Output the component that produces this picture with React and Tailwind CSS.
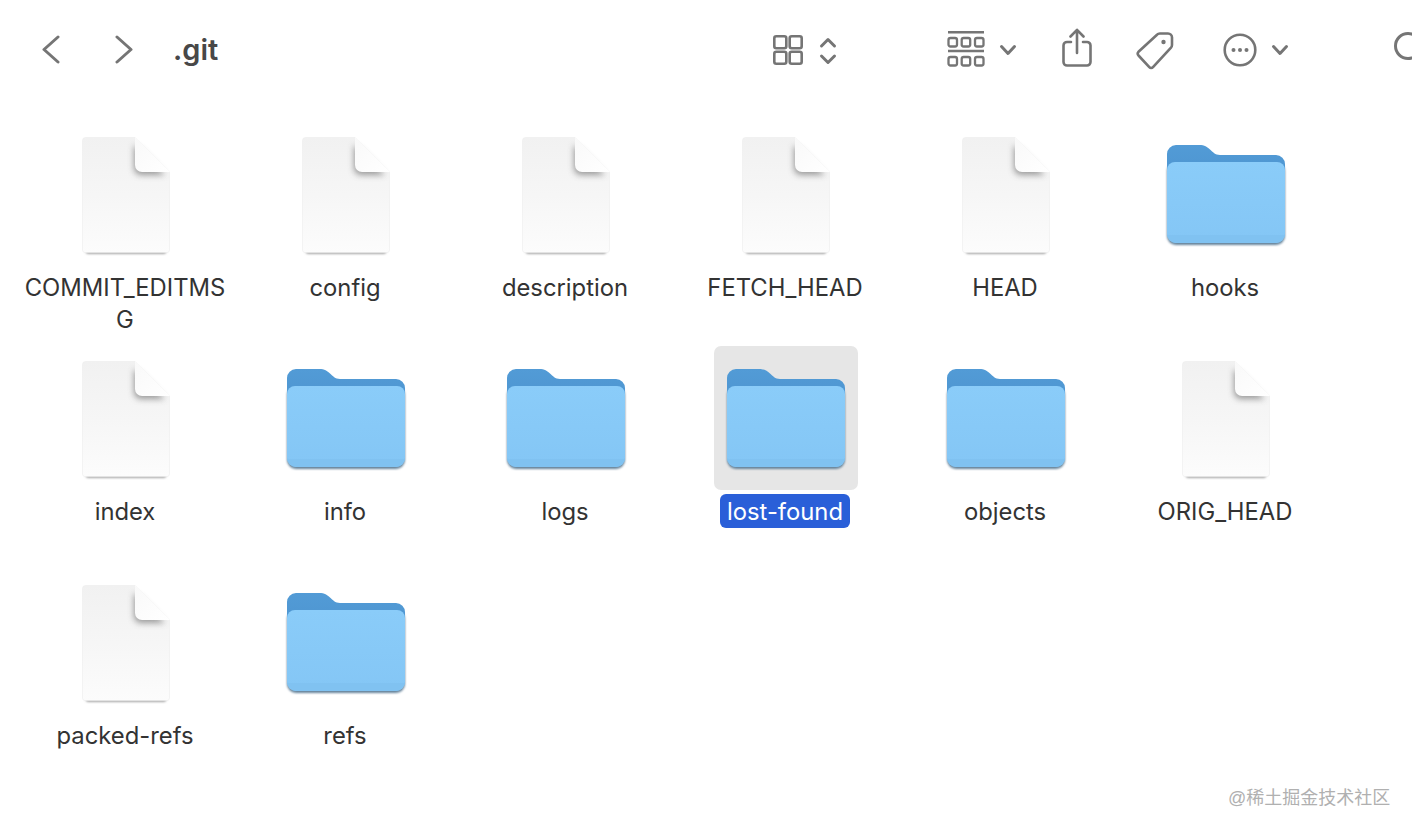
const FONT = "font-['Inter','Liberation_Sans',sans-serif]";

function FileIcon() {
  return (
    <svg width="100" height="124" viewBox="-6 -4 100 124" fill="none">
      <defs>
        <linearGradient id="pg" x1="0" y1="0" x2="0" y2="1">
          <stop offset="0" stopColor="#f1f1f1" />
          <stop offset="0.5" stopColor="#f6f6f6" />
          <stop offset="1" stopColor="#fcfcfc" />
        </linearGradient>
        <linearGradient id="fd" x1="0" y1="0" x2="1" y2="1">
          <stop offset="0" stopColor="#f9f9f9" />
          <stop offset="1" stopColor="#ffffff" />
        </linearGradient>
        <filter id="bl" x="-50%" y="-50%" width="200%" height="200%">
          <feGaussianBlur stdDeviation="3.200" />
        </filter>
        <filter id="bs" x="-10%" y="-10%" width="120%" height="120%">
          <feGaussianBlur stdDeviation="0.8" />
        </filter>
      </defs>
      <path d="M3.500 80H84.500V112a3 3 0 0 1-3 3H6.500a3 3 0 0 1-3-3Z" fill="#a8a8a8" filter="url(#bs)" transform="translate(0 2)" />
      <path d="M3.500 0.500H53L87.500 35V113a2.500 2.500 0 0 1-2.500 2.500H3a2.500 2.500 0 0 1-2.500-2.500V3.500a3 3 0 0 1 3-3Z" fill="url(#pg)" stroke="#ececec" strokeWidth="0.6" />
      <path d="M54 5V28a7 7 0 0 0 7 7H85L62 11Z" fill="#7c7c7c" filter="url(#bl)" transform="translate(-2 3)" opacity="0.75" />
      <path d="M53 0L88 35H60a7 7 0 0 1-7-7Z" fill="url(#fd)" />
    </svg>
  );
}

function FolderIcon() {
  return (
    <svg width="122" height="104" viewBox="-2 -2 122 104" fill="none">
      <defs>
        <linearGradient id="fr" x1="0" y1="0" x2="0" y2="1">
          <stop offset="0" stopColor="#8accf9" />
          <stop offset="1" stopColor="#84c6f5" />
        </linearGradient>
        <linearGradient id="bk" x1="0" y1="0" x2="0" y2="1">
          <stop offset="0" stopColor="#529bd6" />
          <stop offset="1" stopColor="#4a90cc" />
        </linearGradient>
        <filter id="fs" x="-5%" y="-5%" width="110%" height="115%">
          <feGaussianBlur stdDeviation="0.8" />
        </filter>
      </defs>
      <path d="M8 17H110a8 8 0 0 1 8 8V90a9 9 0 0 1-9 9H9a9 9 0 0 1-9-9V25a8 8 0 0 1 8-8Z" fill="#64829a" filter="url(#fs)" transform="translate(0 1)" />
      <path d="M0 60V9a9 9 0 0 1 9-9H32c6 0 8 2 11 4.500s5 5.500 10 5.500H109a9 9 0 0 1 9 9V60Z" fill="url(#bk)" />
      <path d="M8 17H110a8 8 0 0 1 8 8V89a9 9 0 0 1-9 9H9a9 9 0 0 1-9-9V25a8 8 0 0 1 8-8Z" fill="url(#fr)" />
      <path d="M0 90H118V89a9 9 0 0 1-9 9H9a9 9 0 0 1-9-9Z" fill="#80c2f1" />
    </svg>
  );
}

const stroke = { stroke: "#757575", fill: "none", strokeLinecap: "round", strokeLinejoin: "round" };

function Chevron({ dir }) {
  return (
    <svg width="18" height="29" viewBox="0 0 18 29" {...stroke} strokeWidth="3">
      <path d={dir === "l" ? "M16 2L2 14.500L16 27" : "M2 2L16 14.500L2 27"} />
    </svg>
  );
}

function Small() {
  return (
    <svg width="18" height="12" viewBox="0 0 18 12" {...stroke} strokeWidth="3">
      <path d="M2.500 2.500L9 9.500L15.500 2.500" />
    </svg>
  );
}

function GridIcon() {
  return (
    <svg width="30" height="30" viewBox="0 0 30 30" {...stroke} strokeWidth="2.600">
      <rect x="1.300" y="1.300" width="12" height="12" rx="2" />
      <rect x="16.700" y="1.300" width="12" height="12" rx="2" />
      <rect x="1.300" y="16.700" width="12" height="12" rx="2" />
      <rect x="16.700" y="16.700" width="12" height="12" rx="2" />
    </svg>
  );
}

function UpDown() {
  return (
    <svg width="18" height="28" viewBox="0 0 18 28" {...stroke} strokeWidth="3">
      <path d="M2.500 9L9 2.500L15.500 9" />
      <path d="M2.500 19L9 25.500L15.500 19" />
    </svg>
  );
}

function GroupIcon() {
  const cell = (x, y) => <rect key={x + "-" + y} x={x} y={y} width="8.500" height="8.500" rx="2" />;
  return (
    <svg width="38" height="36" viewBox="0 0 38 36" {...stroke} strokeWidth="2.300">
      <path d="M1 1.200H37M1 20H37" strokeWidth="2.600" strokeLinecap="butt" />
      {[1.500, 14.700, 28].map((x) => cell(x, 7))}
      {[1.500, 14.700, 28].map((x) => cell(x, 26))}
    </svg>
  );
}

function ShareIcon() {
  return (
    <svg width="30" height="39" viewBox="0 0 30 39" {...stroke} strokeWidth="2.600">
      <path d="M9 14H5a3.500 3.500 0 0 0-3.500 3.500V34a3.500 3.500 0 0 0 3.500 3.500H25a3.500 3.500 0 0 0 3.500-3.500V17.500A3.500 3.500 0 0 0 25 14H21" />
      <path d="M15 25V2M8.500 8.500L15 1.800L21.500 8.500" />
    </svg>
  );
}

function TagIcon() {
  return (
    <svg width="38" height="39" viewBox="0 0 38 39" {...stroke} strokeWidth="2.600">
      <path d="M24 2.500H32a4 4 0 0 1 4 4V14a4 4 0 0 1-1 2.700L17 36.200a2.500 2.500 0 0 1-3.700 0L2.500 24.500a2.800 2.800 0 0 1 0-3.700L21 3.700a4 4 0 0 1 3-1.200Z" />
      <circle cx="27.500" cy="11" r="2.200" fill="#757575" stroke="none" />
    </svg>
  );
}

function MoreIcon() {
  return (
    <svg width="34" height="34" viewBox="0 0 34 34" {...stroke} strokeWidth="2.600">
      <circle cx="17" cy="17" r="15.300" />
      <circle cx="10.500" cy="17" r="2" fill="#757575" stroke="none" />
      <circle cx="17" cy="17" r="2" fill="#757575" stroke="none" />
      <circle cx="23.500" cy="17" r="2" fill="#757575" stroke="none" />
    </svg>
  );
}

function SearchIcon() {
  return (
    <svg width="30" height="30" viewBox="0 0 30 30" {...stroke} strokeWidth="3">
      <circle cx="14" cy="14" r="12.500" />
    </svg>
  );
}

const items = [
  ["COMMIT_EDITMSG", "file"],
  ["config", "file"],
  ["description", "file"],
  ["FETCH_HEAD", "file"],
  ["HEAD", "file"],
  ["hooks", "folder"],
  ["index", "file"],
  ["info", "folder"],
  ["logs", "folder"],
  ["lost-found", "folder", true],
  ["objects", "folder"],
  ["ORIG_HEAD", "file"],
  ["packed-refs", "file"],
  ["refs", "folder"],
];

function Item({ name, kind, selected }) {
  return (
    <div className="flex flex-col items-center">
      <div className={"flex h-[144px] w-[144px] shrink-0 translate-x-[1px] items-center justify-center rounded-[7px] pt-[2px] " + (selected ? "bg-[#e6e6e6]" : "")}>
        {kind === "file" ? <FileIcon /> : <FolderIcon />}
      </div>
      <div className={"mt-[4px] rounded-[6px] px-[7px] pt-[2px] text-center text-[23.8px] leading-[32px] break-all " + (selected ? "bg-[#2a5fd8] text-white" : "w-[216px] text-[#333333]")}>
        {name}
      </div>
    </div>
  );
}

export default function App() {
  return (
    <div className={"relative h-[832px] w-[1412px] overflow-hidden bg-white " + FONT}>
      <header className="flex h-[100px] items-start pt-[28px]">
        <div className="mt-[7px] ml-[42px]"><Chevron dir="l" /></div>
        <div className="mt-[7px] ml-[55px]"><Chevron dir="r" /></div>
        <h1 className="mt-[3px] ml-[40px] w-[100px] shrink-0 text-[29px] leading-[38px] font-semibold text-[#484848]">.git</h1>
        <div className="mt-[7px] ml-[500px]"><GridIcon /></div>
        <div className="mt-[9px] ml-[16px]"><UpDown /></div>
        <div className="mt-[3px] ml-[110px]"><GroupIcon /></div>
        <div className="mt-[16px] ml-[14px]"><Small /></div>
        <div className="ml-[45px]"><ShareIcon /></div>
        <div className="mt-[3px] ml-[44px]"><TagIcon /></div>
        <div className="mt-[5px] ml-[49px]"><MoreIcon /></div>
        <div className="mt-[16px] ml-[14px]"><Small /></div>
        <div className="mt-[4px] ml-[105px] shrink-0"><SearchIcon /></div>
      </header>
      <main className="grid auto-rows-[224px] grid-cols-[repeat(6,220px)] pt-[22px] pl-[15px]">
        {items.map(([name, kind, selected]) => (
          <Item key={name} name={name} kind={kind} selected={selected} />
        ))}
      </main>
      <div className="absolute top-[786px] left-[1228px] font-['Liberation_Sans','Noto_Sans_CJK_SC',sans-serif] text-[18px] leading-[24px] whitespace-nowrap text-[#b0b0b0]">
        @稀土掘金技术社区
      </div>
    </div>
  );
}
